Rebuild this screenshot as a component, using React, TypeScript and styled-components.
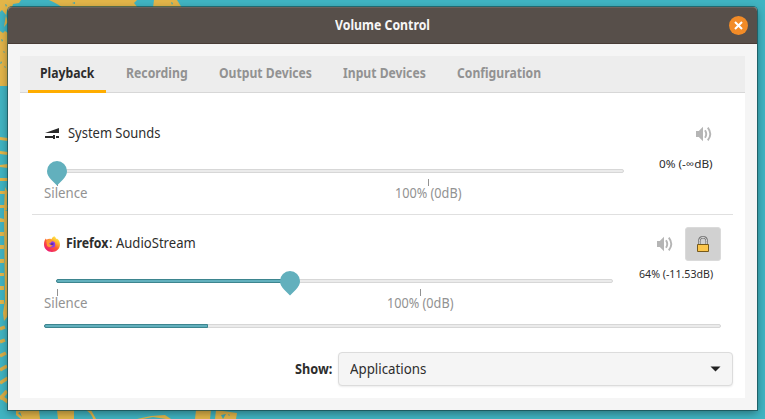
import React from 'react';
import styled, { createGlobalStyle, css } from 'styled-components';

const Global = createGlobalStyle`
  *, *::before, *::after { box-sizing: border-box; }
  body { margin: 0; overflow: hidden; background: #40b1bf; }
`;

const Desktop = styled.div`
  position: relative;
  width: 765px;
  height: 419px;
  overflow: hidden;
  padding: 7px 8px 9px;
  background: #40b4c2;
  font-family: 'Noto Sans', 'Open Sans', sans-serif;
  color: #2d2d2d;
`;

const WallpaperArt = styled.svg`
  position: absolute;
  inset: 0;
`;

const Window = styled.main`
  position: relative;
  width: 749px;
  height: 403px;
  display: flex;
  flex-direction: column;
  background: #f5f5f5;
  border-radius: 4px 4px 0 0;
  box-shadow: 0 0 0 1px rgba(20, 70, 75, 0.65), 0 3px 9px rgba(0, 0, 0, 0.4);
`;

const TitleBar = styled.header`
  flex: 0 0 37px;
  display: grid;
  grid-template-columns: 40px 1fr 40px;
  align-items: center;
  background: #574f4a;
  border-top: 1px solid #6b625c;
  border-bottom: 1px solid #483c37;
  border-radius: 4px 4px 0 0;
  color: #f6f6f6;
`;

const TitleText = styled.div`
  display: flex;
  justify-content: center;
  padding-bottom: 2px;
`;

const CloseButton = styled.button`
  width: 19px;
  height: 19px;
  margin-left: 12px;
  padding: 0;
  border: 0;
  border-radius: 50%;
  background: #f28b27;
  display: grid;
  place-items: center;
`;

const Notebook = styled.section`
  margin: 12px;
  height: 342px;
  display: flex;
  flex-direction: column;
  background: #fff;
`;

const TabBar = styled.nav`
  height: 37px;
  flex: none;
  display: flex;
  align-items: flex-start;
  gap: 8px;
  padding: 0 8px;
  background: #ededed;
  box-shadow: inset 0 -1px #d7d7d7;
`;

const Tab = styled.button<{ $active?: boolean }>`
  height: 37px;
  padding: 0 12px 3px;
  border: 0;
  background: none;
  font: inherit;
  color: ${p => (p.$active ? '#2d2d2d' : '#929292')};
  box-shadow: ${p => (p.$active ? 'inset 0 -3px #ffad00' : 'none')};
`;

const LabelBox = styled.span<{ $width: number }>`
  display: block;
  flex: none;
  width: ${p => p.$width}px;
  height: 18px;
  text-align: left;
`;

const LabelText = styled.span<{ $scale: number; $bold?: boolean; $size: number }>`
  display: block;
  width: max-content;
  white-space: pre;
  font-size: ${p => p.$size}px;
  line-height: 18px;
  font-weight: ${p => (p.$bold ? 700 : 400)};
  transform: scaleX(${p => p.$scale});
  transform-origin: 0 50%;
`;

interface LabelProps {
  children: string;
  width: number;
  scale: number;
  bold?: boolean;
  size?: number;
}

/* Condensed label that reserves its final width in the layout. */
function Label({ children, width, scale, bold, size = 14 }: LabelProps) {
  return (
    <LabelBox $width={width}>
      <LabelText $scale={scale} $bold={bold} $size={size}>{children}</LabelText>
    </LabelBox>
  );
}

const Stream = styled.article<{ $divided?: boolean }>`
  margin: 0 12px;
  height: ${p => (p.$divided ? 122 : 137)}px;
  padding: ${p => (p.$divided ? 24 : 12)}px 12px 0;
  ${p => p.$divided && css`border-bottom: 1px solid #e0e0e0;`}
`;

const StreamHeader = styled.div`
  display: flex;
  align-items: center;
  height: 34px;
`;

const StreamName = styled.div`
  display: flex;
  padding-bottom: 2px;
`;

const StreamIcon = styled.div<{ $gap: number }>`
  flex: none;
  width: 16px;
  height: 16px;
  margin-right: ${p => p.$gap}px;
  svg { display: block; }
`;

const Actions = styled.div<{ $inset: number }>`
  margin-left: auto;
  margin-right: ${p => p.$inset}px;
  display: flex;
  align-items: center;
  gap: 12px;
  svg { display: block; }
`;

const LockButton = styled.button`
  width: 36px;
  height: 34px;
  padding: 0;
  border: 1px solid #dadada;
  border-radius: 3px;
  background: #d1d1d1;
  display: grid;
  place-items: center;
`;

const SliderLine = styled.div`
  display: flex;
  justify-content: space-between;
  height: 48px;
`;

const SliderArea = styled.div<{ $width: number }>`
  position: relative;
  width: ${p => p.$width}px;
  margin-left: 12px;
  padding-top: 18px;
`;

const Trough = styled.div`
  height: 4px;
  border: 1px solid #d7d7d7;
  border-radius: 2px;
  background: #ebebeb;
`;

const Fill = styled.div<{ $width: number }>`
  width: ${p => p.$width}px;
  height: 4px;
  margin: -1px;
  border: 1px solid #3d858f;
  border-radius: 2px 0 0 2px;
  background: #62b0bd;
`;

const Knob = styled.svg<{ $x: number }>`
  position: absolute;
  z-index: 1;
  left: ${p => p.$x - 10}px;
  top: 10px;
`;

const Mark = styled.div<{ $x: number; $half: number }>`
  position: absolute;
  left: ${p => p.$x - p.$half}px;
  top: 28px;
  display: flex;
  flex-direction: column;
  color: #929292;
  &::before {
    content: '';
    width: 1px;
    height: 7px;
    margin-left: ${p => p.$half}px;
    background: #929292;
    margin-bottom: -2px;
  }
`;

const Reading = styled.div`
  padding-top: 4px;
  margin-right: 8px;
`;

const Meter = styled(Trough)`
  margin-top: 15px;
`;

const Footer = styled.footer`
  display: flex;
  align-items: center;
  justify-content: flex-end;
  gap: 6px;
  height: 34px;
  margin: 0 12px;
`;

const Combo = styled.button`
  width: 395px;
  height: 34px;
  padding: 0 11px;
  display: flex;
  align-items: center;
  justify-content: space-between;
  border: 1px solid #dcdcdc;
  border-radius: 4px;
  background: #f5f5f5;
  box-shadow: 0 1px 2px rgba(0, 0, 0, 0.08);
  color: #2d2d2d;
  font: inherit;
`;

function Speaker() {
  return (
    <svg width="16" height="16" viewBox="0 0 16 16" fill="none">
      <path d="M0 5h2.8L7 .8v14.4L2.8 11H0z" fill="#b5b5b5" />
      <path d="M9 4.2q2.5 3.8 0 7.6M11.8 1.6q5 6.4 0 12.8" stroke="#b5b5b5" strokeWidth="1.9" />
    </svg>
  );
}

function MixerIcon() {
  return (
    <svg width="16" height="16" viewBox="0 0 16 16" fill="#2a2a2a">
      <path d="M1 7 15 2v5zM1 10h8V9h2v4H9v-1H1zM12 10h3v2h-3z" />
    </svg>
  );
}

function FirefoxIcon() {
  return (
    <svg width="16" height="16" viewBox="0 0 16 16">
      <defs>
        <linearGradient id="fire" x1="14" y1="1" x2="4" y2="15" gradientUnits="userSpaceOnUse">
          <stop stopColor="#fff44f" />
          <stop offset=".3" stopColor="#ffb92f" />
          <stop offset=".58" stopColor="#ff5a32" />
          <stop offset="1" stopColor="#ed1c70" />
        </linearGradient>
        <radialGradient id="globe">
          <stop stopColor="#733bd8" />
          <stop offset="1" stopColor="#983ee7" />
        </radialGradient>
      </defs>
      <path d="M10.3.2C11.4 1.1 12 2 12.2 3c.5-.2.6-.5.6-.5C14.8 3.6 16 6 16 8.5 16 12.7 12.5 16 8 16S0 12.7 0 8.5C0 6.3.5 4.4 1.8 2.6l.8 1.1C4 2.8 6 2.5 7.4 3.2 8.2 1.5 9 .8 10.3.2z" fill="url(#fire)" />
      <circle cx="8" cy="8.4" r="3.2" fill="url(#globe)" />
      <path d="M2.2 4.4C4 3.4 6.2 3.3 8 5.1L6.6 6.7 5.2 7.2C5.7 9 7 9.1 9 8.6 8 11.4 5.1 12 3 9.7z" fill="#ff9832" />
      <path d="M7.3 7.3h2.3l-.4 1.5-1.6.4-1.1-.8z" fill="#5b2ba3" />
    </svg>
  );
}

function LockIcon() {
  return (
    <svg width="14" height="16" viewBox="0 0 14 16">
      <path d="M3.3 8V5.3C3.3 2.8 4.8 1.3 7 1.3s3.7 1.5 3.7 4V8" fill="none" stroke="#777" strokeWidth="2.6" />
      <path d="M3.3 8V5.3C3.3 2.8 4.8 1.3 7 1.3s3.7 1.5 3.7 4V8" fill="none" stroke="#ddd" strokeWidth="1" />
      <path d="M1.5 8.5h11v7h-11z" fill="#fcc64b" stroke="#765a1c" />
    </svg>
  );
}

function SliderKnob({ x }: { x: number }) {
  return (
    <Knob $x={x} width="20" height="25" viewBox="0 0 20 25">
      <path d="M10 0a10 10 0 0 1 10 10c0 3.4-1.6 6-4 8.4L10 24.5 4 18.4C1.6 16 0 13.4 0 10A10 10 0 0 1 10 0z" fill="#62b0bd" />
    </Knob>
  );
}

interface VolumeProps {
  length: number;
  value: number;
  full: number;
  reading: React.ReactNode;
}

function Volume({ length, value, full, reading }: VolumeProps) {
  return (
    <SliderLine>
      <SliderArea $width={length}>
        <Trough>{value > 1 && <Fill $width={value} />}</Trough>
        <SliderKnob x={value} />
        <Mark $x={1} $half={13}><Label width={44} scale={0.945}>Silence</Label></Mark>
        <Mark $x={full} $half={33}><Label width={67} scale={0.905}>100% (0dB)</Label></Mark>
      </SliderArea>
      <Reading>{reading}</Reading>
    </SliderLine>
  );
}

function Wallpaper() {
  return (
    <WallpaperArt width="765" height="419" viewBox="0 0 765 419" fill="#e2b549">
      <path d="M0 0h21l-2 3-6 1-2 7-4-1-1 6 2 6-4 5 2-12-4-5-2 2zM49 0h88l-3 3 4 5H63q-5-4-14-8zM154 0h23l5 8h-29zM0 31l3 2 2-2 3 2v53H0z" />
      <path fill="#40a9b6" d="m5 4 2 1-1 2zM72 3l3-1v2zM171 2l2 1-1 2zM1 39l2 1-1 2zM3 51l2 1-1 1zM1 61l1 2-2 1zM4 66l2 1-1 1z" />
      <path d="M0 137l8 1v3l-8-1zM0 151l8 1v3l-8-1zM0 165l8-1v4l-8-1zM0 178h8v3H0zM5 187l2 4v19H4zM0 191h8v3H0zM0 205h8v3H0zM0 218l4 1v3H0zM0 232h4v4H0zM0 245h4v4H0zM0 259h4v4H0zM0 273h4v3H0zM0 286h4v4H0zM0 300h4v4H0zM4 210l4 1v105l-4 5-1-8 2-12z" />
      <path fill="none" stroke="#d8ae47" strokeWidth="3.5" d="m0 329 5-2M0 342l5-2M0 356l6-3M0 370l7-4M0 383l8-5M0 399l7-8M0 396l8 6" />
      <path d="M16 410h23l1 9H21l-5-4zM57 410h17v9H58zM91 410l5 9h-3q-1-5-7-9zM137 419l14-3 14-1 6 4h-5l-13-2-10 2zM196 410h15l-1 9h-15zM216 410l21 3-1 6h-21z" />
      <path fill="#40a9b6" d="m221 415 5-1-3 5zM228 414l2 1-1 1zM18 413l2-1 2 5z" />
    </WallpaperArt>
  );
}

export default function App() {
  return (
    <Desktop>
      <Global />
      <Wallpaper />
      <Window>
        <TitleBar>
          <span />
          <TitleText><Label bold width={95} scale={0.877}>Volume Control</Label></TitleText>
          <CloseButton aria-label="Close">
            <svg width="9" height="9" viewBox="0 0 9 9"><path d="m1 1 7 7M8 1 1 8" stroke="#fff" strokeWidth="2.1" /></svg>
          </CloseButton>
        </TitleBar>
        <Notebook>
          <TabBar>
            <Tab $active><Label bold width={54} scale={0.872}>Playback</Label></Tab>
            <Tab><Label bold width={61} scale={0.875}>Recording</Label></Tab>
            <Tab><Label bold width={92} scale={0.868}>Output Devices</Label></Tab>
            <Tab><Label bold width={82} scale={0.868}>Input Devices</Label></Tab>
            <Tab><Label bold width={84} scale={0.868}>Configuration</Label></Tab>
          </TabBar>
          <Stream $divided>
            <StreamHeader>
              <StreamIcon $gap={8}><MixerIcon /></StreamIcon>
              <StreamName><Label width={93} scale={0.925}>System Sounds</Label></StreamName>
              <Actions $inset={9}><Speaker /></Actions>
            </StreamHeader>
            <Volume length={568} value={1} full={372}
              reading={<Label size={11} width={54} scale={1.07}>0% (-∞dB)</Label>} />
          </Stream>
          <Stream>
            <StreamHeader>
              <StreamIcon $gap={6}><FirefoxIcon /></StreamIcon>
              <StreamName>
                <Label bold width={43} scale={0.88}>Firefox</Label>
                <Label width={87} scale={0.935}>: AudioStream</Label>
              </StreamName>
              <Actions $inset={0}>
                <Speaker />
                <LockButton aria-label="Lock channels together"><LockIcon /></LockButton>
              </Actions>
            </StreamHeader>
            <Volume length={557} value={234} full={364}
              reading={<Label size={11} width={74} scale={0.965}>64% (-11.53dB)</Label>} />
            <Meter><Fill $width={164} /></Meter>
          </Stream>
          <Footer>
            <Label bold width={37} scale={0.905}>Show:</Label>
            <Combo>
              <Label width={77} scale={0.95}>Applications</Label>
              <svg width="11" height="6" viewBox="0 0 11 6"><path d="M.5.5h10l-5 5z" fill="#222" /></svg>
            </Combo>
          </Footer>
        </Notebook>
      </Window>
    </Desktop>
  );
}
